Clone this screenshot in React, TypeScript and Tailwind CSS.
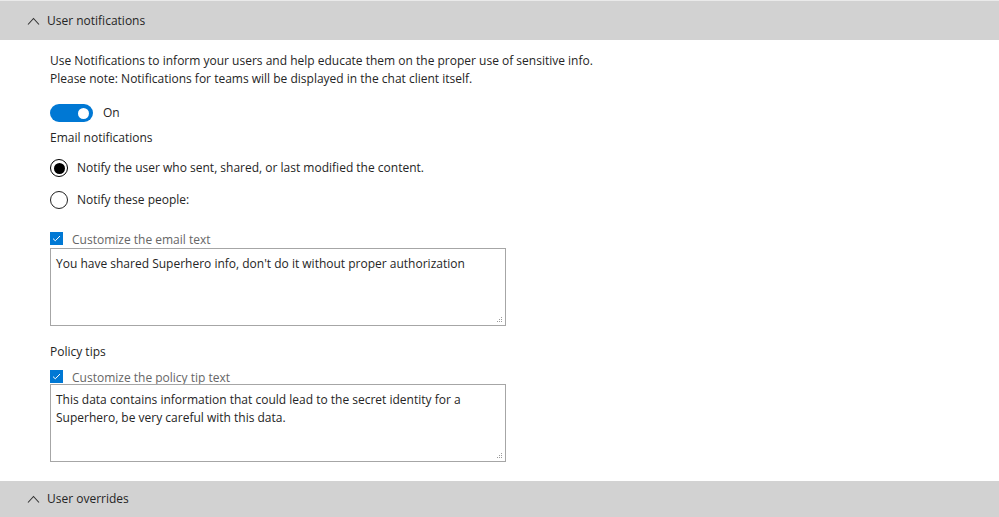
import React from "react";

// chevron used on the collapsible section headers
const ChevronUp = () => (
  <svg width="13" height="8" viewBox="0 0 13 8" className="shrink-0">
    <path d="M1 7.5 L6.5 1.5 L12 7.5" fill="none" stroke="#333" strokeWidth="1.1" />
  </svg>
);

const SectionHeader: React.FC<{ title: string; className?: string }> = ({ title, className }) => (
  <div className={`flex shrink-0 items-center gap-[7px] bg-[#d2d2d2] pl-[27px] text-[12px] text-[#252525] ${className ?? ""}`}>
    <ChevronUp />
    <span>{title}</span>
  </div>
);

const Radio: React.FC<{ checked?: boolean; label: string }> = ({ checked, label }) => (
  <div className="flex items-center gap-[9px]">
    {checked ? (
      <span className="flex h-[18px] w-[18px] items-center justify-center rounded-full border-[1.5px] border-black">
        <span className="h-[11px] w-[11px] rounded-full bg-black" />
      </span>
    ) : (
      <span className="h-[18px] w-[18px] rounded-full border-[1.5px] border-[#222]" />
    )}
    <span className="text-[12px] text-[#252525]">{label}</span>
  </div>
);

const Checkbox: React.FC<{ label: string }> = ({ label }) => (
  <div className="flex h-[16px] items-start gap-[9px]">
    <span className="flex h-[13px] w-[13px] shrink-0 items-center justify-center bg-[#0078d4]">
      <svg width="9" height="7" viewBox="0 0 9 7">
        <path d="M1 3.6 L3.3 5.8 L8 1" fill="none" stroke="white" strokeWidth="1" />
      </svg>
    </span>
    <span className="text-[12px] leading-[16px] text-[#666]">{label}</span>
  </div>
);

const TextBox: React.FC<{ text: string }> = ({ text }) => (
  <div className="relative h-[78px] w-[456px] border border-[#a6a6a6] bg-white px-[5px] pt-[6px] text-[12px] leading-[18px] text-[#252525]">
    {text}
    {/* resize grip */}
    <svg width="6" height="6" viewBox="0 0 6 6" className="absolute bottom-[2px] right-[2px]">
      <g fill="#9a9a9a">
        <rect x="4" y="0" width="1" height="1" />
        <rect x="2" y="2" width="1" height="1" />
        <rect x="4" y="2" width="1" height="1" />
        <rect x="0" y="4" width="1" height="1" />
        <rect x="2" y="4" width="1" height="1" />
        <rect x="4" y="4" width="1" height="1" />
      </g>
    </svg>
  </div>
);

export default function App() {
  return (
    <div className="flex h-[517px] w-[999px] flex-col overflow-hidden bg-white font-['Open_Sans',sans-serif] text-[#252525]">
      <div className="h-px shrink-0 bg-[#eaeaea]" />
      <SectionHeader title="User notifications" className="h-[39px]" />

      <div className="flex shrink-0 flex-col pl-[50px]">
        <div className="mt-[12px] text-[12px] leading-[18px]">
          <p>Use Notifications to inform your users and help educate them on the proper use of sensitive info.</p>
          <p>Please note: Notifications for teams will be displayed in the chat client itself.</p>
        </div>

        {/* toggle */}
        <div className="mt-[16px] flex items-center gap-[10px]">
          <span className="flex h-[18px] w-[43px] items-center justify-end rounded-full bg-[#0078d4] pr-[4px]">
            <span className="h-[11px] w-[11px] rounded-full bg-white" />
          </span>
          <span className="text-[12px]">On</span>
        </div>

        <div className="mt-[7px] text-[12px]">Email notifications</div>

        <div className="mt-[12px] flex flex-col gap-[14px]">
          <Radio checked label="Notify the user who sent, shared, or last modified the content." />
          <Radio label="Notify these people:" />
        </div>

        <div className="mt-[23px]">
          <Checkbox label="Customize the email text" />
        </div>
        <TextBox text="You have shared Superhero info, don't do it without proper authorization" />

        <div className="mt-[17px] text-[12px]">Policy tips</div>
        <div className="mt-[9px]">
          <Checkbox label="Customize the policy tip text" />
        </div>
        <div className="mt-[-2px]">
          <TextBox text="This data contains information that could lead to the secret identity for a Superhero, be very careful with this data." />
        </div>
      </div>

      <SectionHeader title="User overrides" className="mt-[19px] h-[36px]" />
    </div>
  );
}
